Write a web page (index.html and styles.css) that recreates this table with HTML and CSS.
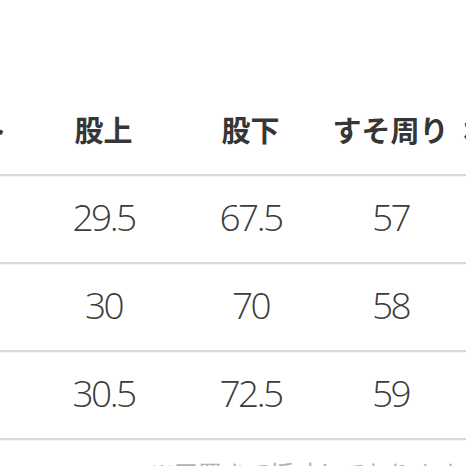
FILE: index.html
```
<!DOCTYPE html>
<html lang="ja">
<head>
<meta charset="utf-8">
<link rel="stylesheet" href="styles.css">
</head>
<body>
<div class="page">
  <div class="table">
    <div class="row head">
      <div class="cell c0">ウエスト</div>
      <div class="cell c1">股上</div>
      <div class="cell c2">股下</div>
      <div class="cell c3">すそ周り</div>
      <div class="cell c4">わたり</div>
    </div>
    <div class="row">
      <div class="cell c0">76</div>
      <div class="cell c1">29.5</div>
      <div class="cell c2">67.5</div>
      <div class="cell c3">57</div>
      <div class="cell c4">32</div>
    </div>
    <div class="row">
      <div class="cell c0">80</div>
      <div class="cell c1">30</div>
      <div class="cell c2">70</div>
      <div class="cell c3">58</div>
      <div class="cell c4">33</div>
    </div>
    <div class="row">
      <div class="cell c0">84</div>
      <div class="cell c1">30.5</div>
      <div class="cell c2">72.5</div>
      <div class="cell c3">59</div>
      <div class="cell c4">34</div>
    </div>
  </div>
  <p class="note">※平置きで採寸しております。多少の誤差はご了承ください。</p>
</div>
</body>
</html>
```
FILE: styles.css
```
html, body {
  margin: 0;
  padding: 0;
  background: #ffffff;
  overflow: hidden;
}
.page {
  width: 466px;
  height: 466px;
  overflow: hidden;
  padding-top: 88px;
  box-sizing: border-box;
}
.table {
  display: flex;
  flex-direction: column;
}
.row {
  display: flex;
  height: 86px;
  border-bottom: 2px solid #dadada;
  box-shadow: 0 1px 1px rgba(0,0,0,0.04);
  align-items: center;
  margin-left: -117px;
  width: 760px;
}
.cell {
  flex: none;
  text-align: center;
  white-space: nowrap;
  font-family: "Open Sans", "Noto Sans CJK JP", sans-serif;
  font-weight: 300;
  font-size: 37px;
  letter-spacing: -2.5px;
  color: #3c3c3c;
  margin-top: -6px;
}
.c0 { width: 147px; }
.c1 { width: 147px; }
.c2 { width: 147px; }
.c3 { width: 133px; }
.c4 { width: 200px; }
.head .cell {
  font-family: "Noto Sans CJK JP", sans-serif;
  font-weight: 700;
  font-size: 29px;
  letter-spacing: 0;
  color: #363636;
  margin-top: -4px;
}
.head .c0 { text-align: right; width: 124px; margin-right: 23px; }
.head .c4 { text-align: left; padding-left: 6px; }
.note {
  margin: 15px 0 0 150px;
  font-family: "Noto Sans CJK JP", sans-serif;
  font-size: 24px;
  color: #b0b0b0;
  white-space: nowrap;
}
```
